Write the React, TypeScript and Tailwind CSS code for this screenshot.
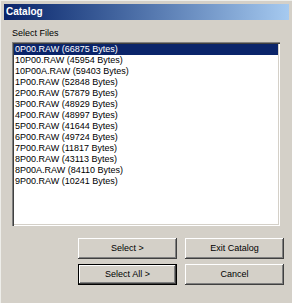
import React from "react";

const files = [
  "0P00.RAW (66875 Bytes)",
  "10P00.RAW (45954 Bytes)",
  "10P00A.RAW (59403 Bytes)",
  "1P00.RAW (52848 Bytes)",
  "2P00.RAW (57879 Bytes)",
  "3P00.RAW (48929 Bytes)",
  "4P00.RAW (48997 Bytes)",
  "5P00.RAW (41644 Bytes)",
  "6P00.RAW (49724 Bytes)",
  "7P00.RAW (11817 Bytes)",
  "8P00.RAW (43113 Bytes)",
  "8P00A.RAW (84110 Bytes)",
  "9P00.RAW (10241 Bytes)",
];

const Button: React.FC<{ label: string; isDefault?: boolean }> = ({ label, isDefault }) => (
  <button
    className={
      "w-[99px] h-[21px] bg-[#d4d0c8] text-[9px] text-black flex items-center justify-center " +
      (isDefault
        ? "shadow-[inset_0_0_0_1px_#000000,inset_-2px_-2px_0_#404040,inset_2px_2px_0_#ffffff,inset_-3px_-3px_0_#808080]"
        : "shadow-[inset_-1px_-1px_0_#404040,inset_1px_1px_0_#ffffff,inset_-2px_-2px_0_#808080]")
    }
  >
    {label}
  </button>
);

export default function App() {
  const selected = 0;

  return (
    <div
      className="w-[292px] h-[303px] bg-[#d4d0c8] flex flex-col border-l-[1px] border-t-[1px] border-[#eeeeea] px-[3px] pt-[3px]"
      style={{ fontFamily: '"Liberation Sans", Arial, sans-serif' }}
    >
      {/* Title bar */}
      <div className="h-[16px] flex items-center pl-[2px] bg-gradient-to-r from-[#0a246a] to-[#a6caf0]">
        <span className="text-white font-bold text-[10px] leading-none">Catalog</span>
      </div>

      <div className="flex flex-col pl-[8px] pr-[5px]">
        <div className="text-[9px] text-black mt-[8px] leading-[11px]">Select Files</div>

        {/* File list */}
        <div className="mt-[3px] mr-[4px] h-[184px] bg-white p-[2px] shadow-[inset_1px_1px_0_#808080,inset_2px_2px_0_#404040,inset_-1px_-1px_0_#ffffff,inset_-2px_-2px_0_#d4d0c8]">
          <ul className="flex flex-col">
            {files.map((f, i) => (
              <li
                key={f}
                className={
                  "h-[11px] leading-[11px] text-[9px] pl-[1px] whitespace-nowrap " +
                  (i === selected ? "bg-[#0a246a] text-white" : "text-black")
                }
              >
                {f}
              </li>
            ))}
          </ul>
        </div>

        {/* Buttons */}
        <div className="mt-[12px] flex flex-col gap-[5px] items-end">
          <div className="flex gap-[8px]">
            <Button label="Select >" />
            <Button label="Exit Catalog" />
          </div>
          <div className="flex gap-[8px]">
            <Button label="Select All >" isDefault />
            <Button label="Cancel" />
          </div>
        </div>
      </div>
    </div>
  );
}
